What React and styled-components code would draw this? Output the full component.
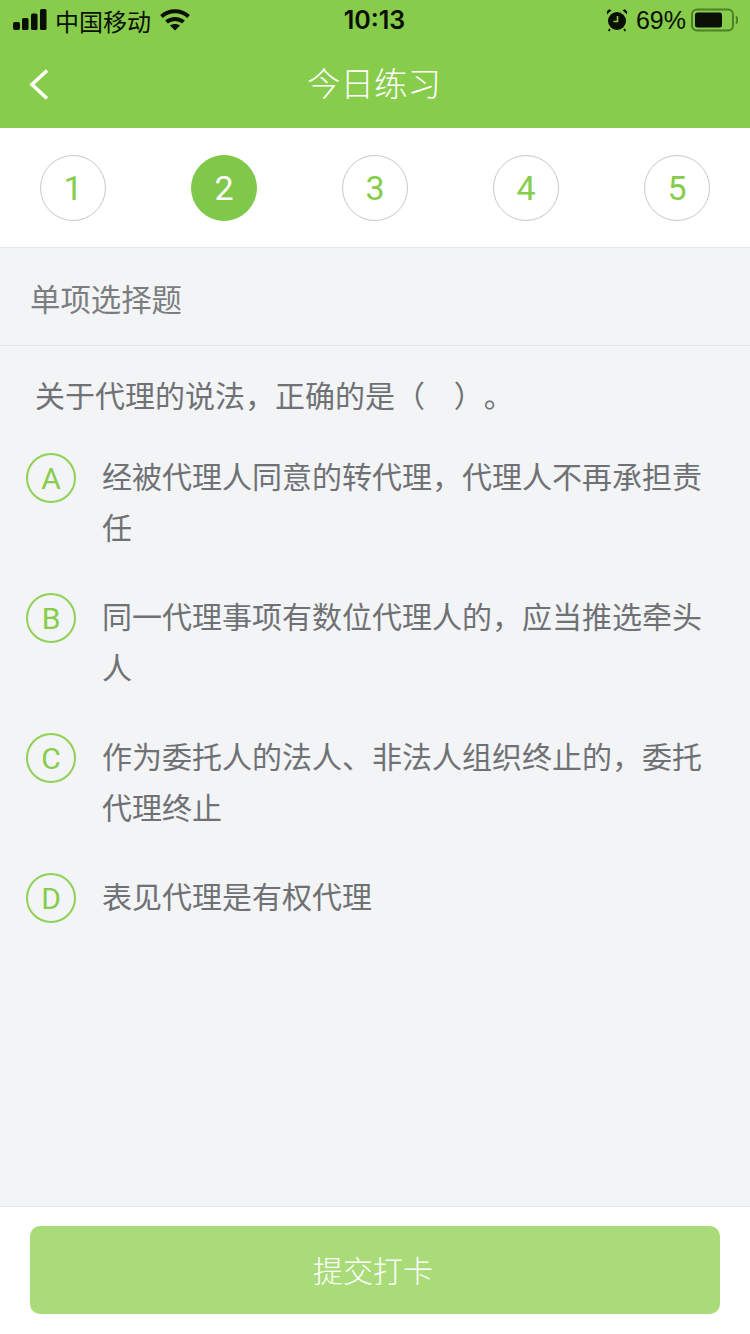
import React from "react";
import styled, { createGlobalStyle } from "styled-components";

const GlobalStyle = createGlobalStyle`
  html, body {
    margin: 0;
    padding: 0;
    background: #f3f4f6;
    font-family: "Liberation Sans", "Noto Sans CJK SC", sans-serif;
  }
  * { box-sizing: border-box; }
`;

const Page = styled.div`
  width: 750px;
  height: 1334px;
  display: flex;
  flex-direction: column;
  background: #f3f4f6;
  overflow: hidden;
`;

const Header = styled.header`
  height: 128px;
  background: #87cc4b;
  display: flex;
  flex-direction: column;
`;

const StatusBar = styled.div`
  height: 40px;
  padding: 0 12px 0 13px;
  display: grid;
  grid-template-columns: 1fr auto 1fr;
  align-items: center;
  color: #0a0f05;
  font-size: 24px;
`;

const StatusLeft = styled.div`
  display: flex;
  align-items: center;
  gap: 9px;
`;

const StatusRight = styled.div`
  display: flex;
  align-items: center;
  justify-content: flex-end;
  gap: 8px;
`;

const Clock = styled.span`
  font-family: Inter, "Liberation Sans", sans-serif;
  font-weight: 600;
  font-size: 25px;
  margin-right: 2px;
`;

const Carrier = styled.span`
  margin-left: -1px;
`;

const Percent = styled.span`
  font-size: 25px;
  margin-right: -3px;
`;

const NavBar = styled.div`
  flex: 1;
  position: relative;
  display: flex;
  align-items: center;
  justify-content: center;
  padding: 0 2px 5px 0;
`;

const Title = styled.h1`
  margin: 0;
  font-size: 33.5px;
  font-weight: 300;
  color: #fff;
`;

const BackButton = styled.svg`
  position: absolute;
  left: 28px;
  top: 28px;
`;

const Steps = styled.div`
  height: 120px;
  background: #fff;
  border-bottom: 1px solid #e6e7ea;
  padding: 27px 40px 0;
  display: flex;
  justify-content: space-between;
  align-items: flex-start;
`;

const Step = styled.div`
  width: 66px;
  height: 66px;
  border-radius: 50%;
  display: flex;
  align-items: center;
  justify-content: center;
  font-family: Roboto, "Liberation Sans", sans-serif;
  font-size: 34px;
  font-weight: 400;
  color: ${(p) => (p.$active ? "#fff" : "#86cd4b")};
  background: ${(p) => (p.$active ? "#7fc84a" : "#fff")};
  border: 1px solid ${(p) => (p.$active ? "#7fc84a" : "#c9c9c9")};
`;

const SectionLabel = styled.div`
  height: 98px;
  padding: 8px 30px 0;
  display: flex;
  align-items: center;
  font-size: 30.4px;
  line-height: 1;
  color: #7b7d80;
  border-bottom: 1px solid #e6e7ea;
`;

const Body = styled.main`
  flex: 1;
  padding: 25px 26px 0;
`;

const Question = styled.p`
  margin: 0 0 30px 9px;
  font-size: 30px;
  line-height: 51px;
  color: #6f7174;
  white-space: pre-wrap;
  word-spacing: 6px;
  text-spacing-trim: space-all;
`;

const Options = styled.ol`
  margin: 0;
  padding: 0;
  list-style: none;
  display: flex;
  flex-direction: column;
  gap: 38px;
`;

const Option = styled.li`
  display: flex;
  align-items: flex-start;
  gap: 26px;
`;

const OptionMark = styled.span`
  flex: none;
  width: 50px;
  height: 50px;
  margin-top: 1px;
  border-radius: 50%;
  border: 2px solid #8fd157;
  display: flex;
  align-items: center;
  justify-content: center;
  font-family: Roboto, "Liberation Sans", sans-serif;
  font-size: 30px;
  font-weight: 400;
  color: #86cd4b;
`;

const OptionText = styled.span`
  width: 600px;
  font-size: 30px;
  line-height: 51px;
  color: #6f7174;
`;

const Footer = styled.footer`
  height: 128px;
  padding: 19px 30px 0;
  background: #fff;
  border-top: 1px solid #e6e7ea;
`;

const SubmitButton = styled.button`
  width: 100%;
  height: 88px;
  padding: 0 4px 2px 0;
  border: 0;
  border-radius: 10px;
  background: #a9dc78;
  color: #fff;
  font-family: inherit;
  font-size: 30px;
  font-weight: 300;
`;

const SignalIcon = () => (
  <svg width="34" height="22" viewBox="0 0 34 22">
    <rect x="0" y="13" width="7" height="8" rx="2" fill="#0a0f05" />
    <rect x="9" y="9" width="6.5" height="12" rx="1.5" fill="#0a0f05" />
    <rect x="18" y="4.5" width="6.5" height="16.5" rx="1.5" fill="#0a0f05" />
    <rect x="27" y="0" width="6.5" height="21" rx="1.5" fill="#0a0f05" />
  </svg>
);

const WifiIcon = () => (
  <svg width="30" height="22" viewBox="0 0 30 22" fill="none" stroke="#0a0f05" strokeWidth="4">
    <path d="M1.5 7.5C9 0.6 21 0.6 28.5 7.5" />
    <path d="M6.5 13C11.2 8.9 18.8 8.9 23.5 13" />
    <path d="M15 21.5L10 16.6C13 14.6 17 14.6 20 16.6Z" fill="#0a0f05" stroke="none" />
  </svg>
);

const AlarmIcon = () => (
  <svg width="22" height="24" viewBox="0 0 22 24">
    <circle cx="11" cy="13" r="9" fill="#0a0f05" />
    <path d="M1 6.5L5.5 2.2 3 1.2 0.8 3.4Z M21 6.5L16.5 2.2 19 1.2 21.2 3.4Z" fill="#0a0f05" />
    <path d="M4 21L2.6 23M18 21L19.4 23" stroke="#0a0f05" strokeWidth="1.8" />
    <path d="M11.5 8V13.5H7.5" fill="none" stroke="#87cc4b" strokeWidth="1.6" />
  </svg>
);

const BatteryIcon = () => (
  <svg width="47" height="24" viewBox="0 0 47 24">
    <rect x="1" y="1.5" width="41" height="21" rx="5" fill="none" stroke="#4f7f2a" strokeWidth="2" />
    <rect x="4" y="4.5" width="27" height="15" rx="2.5" fill="#0a0f05" />
    <path d="M45 8.5C46.5 9.5 46.5 14.5 45 15.5" fill="none" stroke="#4f7f2a" strokeWidth="2" />
  </svg>
);

const steps = [1, 2, 3, 4, 5];

const options = [
  { key: "A", text: "经被代理人同意的转代理，代理人不再承担责任" },
  { key: "B", text: "同一代理事项有数位代理人的，应当推选牵头人" },
  { key: "C", text: "作为委托人的法人、非法人组织终止的，委托代理终止" },
  { key: "D", text: "表见代理是有权代理" },
];

const App = () => (
  <Page>
    <GlobalStyle />
    <Header>
      <StatusBar>
        <StatusLeft>
          <SignalIcon />
          <Carrier>中国移动</Carrier>
          <WifiIcon />
        </StatusLeft>
        <Clock>10:13</Clock>
        <StatusRight>
          <AlarmIcon />
          <Percent>69%</Percent>
          <BatteryIcon />
        </StatusRight>
      </StatusBar>
      <NavBar>
        <BackButton width="24" height="34" viewBox="0 0 24 34" fill="none" stroke="#fff" strokeWidth="3.6">
          <path d="M19 2.5L4 16.5L19 30.5" />
        </BackButton>
        <Title>今日练习</Title>
      </NavBar>
    </Header>
    <Steps>
      {steps.map((n) => (
        <Step key={n} $active={n === 2}>
          {n}
        </Step>
      ))}
    </Steps>
    <SectionLabel>单项选择题</SectionLabel>
    <Body>
      <Question>关于代理的说法，正确的是（  ）。</Question>
      <Options>
        {options.map((o) => (
          <Option key={o.key}>
            <OptionMark>{o.key}</OptionMark>
            <OptionText>{o.text}</OptionText>
          </Option>
        ))}
      </Options>
    </Body>
    <Footer>
      <SubmitButton>提交打卡</SubmitButton>
    </Footer>
  </Page>
);

export default App;
